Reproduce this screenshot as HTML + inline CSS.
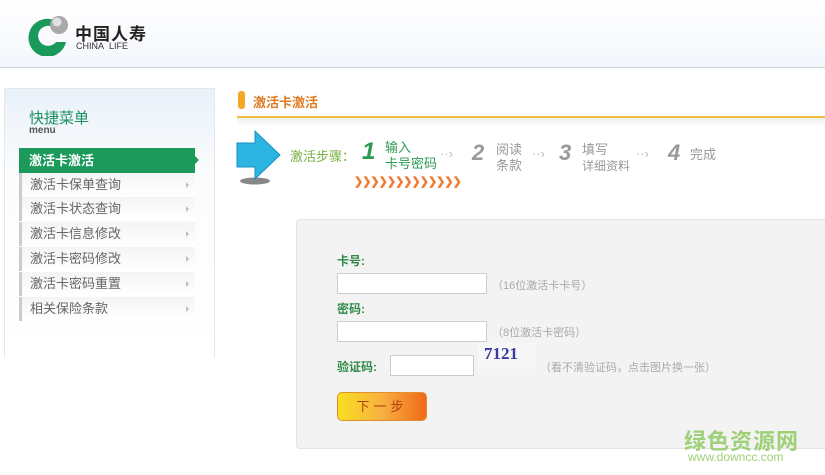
<!DOCTYPE html>
<html><head><meta charset="utf-8"><style>
*{margin:0;padding:0;box-sizing:border-box}
body{width:825px;height:475px;overflow:hidden;background:#fff;font-family:"Liberation Sans","Noto Sans CJK SC",sans-serif;position:relative}
.a{position:absolute}
.hdr{left:0;top:0;width:825px;height:68px;background:linear-gradient(#fff,#f3f6fb);border-bottom:1px solid #c9d3df}
.side{left:4px;top:88px;width:211px;height:270px;background:linear-gradient(#e9f1f9,#fafcfd 30%,#fff);border:1px solid #e2e8ee;border-bottom:none}
.mi{position:absolute;left:19px;width:176px;height:24px;background:linear-gradient(#f4f4f4,#fff);border-left:3px solid #ccc;font-size:13px;color:#666;line-height:24px;padding-left:8px}
.mi:after{content:"";position:absolute;right:6px;top:9px;border-left:3px solid #bbb;border-top:3px solid transparent;border-bottom:3px solid transparent}
.lab{font-size:12px;color:#2f8a47;font-weight:bold}
.inp{background:#fff;border:1px solid #ccc;height:21px}
.hint{font-size:11px;color:#aaa}
.g{color:#999;font-size:13px}
</style></head><body>
<div class="a hdr"></div>
<svg class="a" style="left:28px;top:14px" width="44" height="42" viewBox="0 0 44 42"><path d="M30 8 A19 19 0 1 0 38 28 L28 28 A10 10 0 1 1 22 12 Z" fill="#1a9a5a"/><circle cx="31" cy="11" r="9" fill="#a9a9a9"/><circle cx="29" cy="8" r="4.5" fill="#e0e0e0"/></svg>
<div class="a" style="left:75px;top:20px;font-size:17px;font-weight:bold;color:#222;letter-spacing:1px">中国人寿</div>
<div class="a" style="left:76px;top:41px;font-size:9px;color:#333">CHINA&nbsp; LIFE</div>
<div class="a side"></div>
<div class="a" style="left:29px;top:107px;font-size:15px;color:#1a9060">快捷菜单</div>
<div class="a" style="left:29px;top:125px;font-size:10px;font-weight:bold;color:#555">menu</div>
<div class="a" style="left:19px;top:148px;width:176px;height:25px;background:#1b9a5c;color:#fff;font-size:13px;font-weight:bold;line-height:25px;padding-left:10px">激活卡激活</div>
<div class="a" style="left:195px;top:156px;border-left:4px solid #1b9a5c;border-top:4px solid transparent;border-bottom:4px solid transparent"></div>
<div class="mi" style="top:173px">激活卡保单查询</div>
<div class="mi" style="top:197px">激活卡状态查询</div>
<div class="mi" style="top:222px">激活卡信息修改</div>
<div class="mi" style="top:247px">激活卡密码修改</div>
<div class="mi" style="top:272px">激活卡密码重置</div>
<div class="mi" style="top:297px">相关保险条款</div>
<div class="a" style="left:238px;top:91px;width:7px;height:18px;background:#f5a623;border-radius:3px"></div>
<div class="a" style="left:253px;top:92px;font-size:13px;font-weight:bold;color:#e07a20">激活卡激活</div>
<div class="a" style="left:237px;top:116px;width:588px;height:2px;background:#f0c040"></div>
<div class="a" style="left:237px;top:118px;width:588px;height:8px;background:linear-gradient(#eef0ee,#fff)"></div>
<svg class="a" style="left:235px;top:128px" width="50" height="58" viewBox="0 0 50 58"><ellipse cx="20" cy="53" rx="15" ry="3.5" fill="#888"/><path d="M2 15 H20 V3 L45 27 L20 51 V39 H2 Z" fill="#2cb5e0" stroke="#1a8fc0"/></svg>
<div class="a" style="left:290px;top:146px;font-size:13px;color:#7ab040">激活步骤：</div>
<div class="a" style="left:362px;top:138px;font-size:24px;font-style:italic;font-weight:bold;color:#2c9a50">1</div>
<div class="a" style="left:385px;top:140px;font-size:13px;color:#2c9a50;line-height:16px">输入<br>卡号密码</div>
<div class="a" style="left:354px;top:175px;font-size:11px;color:#f07a30;letter-spacing:-1px;font-weight:bold">❯❯❯❯❯❯❯❯❯❯❯❯❯</div>
<div class="a g" style="left:440px;top:146px;color:#bbb">··›</div>
<div class="a" style="left:472px;top:140px;font-size:22px;font-style:italic;font-weight:bold;color:#999">2</div>
<div class="a g" style="left:496px;top:142px;line-height:16px">阅读<br>条款</div>
<div class="a g" style="left:532px;top:146px;color:#bbb">··›</div>
<div class="a" style="left:559px;top:140px;font-size:22px;font-style:italic;font-weight:bold;color:#999">3</div>
<div class="a g" style="left:582px;top:142px;line-height:16px">填写<br><span style="font-size:12px">详细资料</span></div>
<div class="a g" style="left:636px;top:146px;color:#bbb">··›</div>
<div class="a" style="left:668px;top:140px;font-size:22px;font-style:italic;font-weight:bold;color:#999">4</div>
<div class="a g" style="left:690px;top:144px">完成</div>
<div class="a" style="left:296px;top:219px;width:540px;height:230px;background:#f3f3f3;border:1px solid #e4e4e4;border-radius:4px"></div>
<div class="a lab" style="left:337px;top:252px">卡号:</div>
<div class="a inp" style="left:337px;top:273px;width:150px"></div>
<div class="a hint" style="left:492px;top:277px">（16位激活卡卡号）</div>
<div class="a lab" style="left:337px;top:300px">密码:</div>
<div class="a inp" style="left:337px;top:321px;width:150px"></div>
<div class="a hint" style="left:492px;top:324px">（8位激活卡密码）</div>
<div class="a lab" style="left:337px;top:358px">验证码:</div>
<div class="a inp" style="left:390px;top:355px;width:84px"></div>
<div class="a" style="left:478px;top:343px;width:58px;height:26px;background:#f7f7f7"></div>
<div class="a" style="left:484px;top:344px;font-size:17px;font-weight:bold;color:#3a3aa0;font-family:'Liberation Serif',serif">7121</div>
<div class="a hint" style="left:540px;top:359px">（看不清验证码，点击图片换一张）</div>
<div class="a" style="left:337px;top:392px;width:90px;height:29px;border-radius:5px;background:linear-gradient(90deg,#f8e020,#f8b040 50%,#f06a18);border:1px solid #e09030;font-size:13px;color:#b04010;text-align:center;line-height:28px;letter-spacing:4px">下一步</div>
<div class="a" style="left:684px;top:424px;font-size:22px;font-weight:bold;color:#9ed078;letter-spacing:1px">绿色资源网</div>
<div class="a" style="left:688px;top:450px;font-size:12px;color:#9ed078">www.downcc.com</div>
</body></html>
